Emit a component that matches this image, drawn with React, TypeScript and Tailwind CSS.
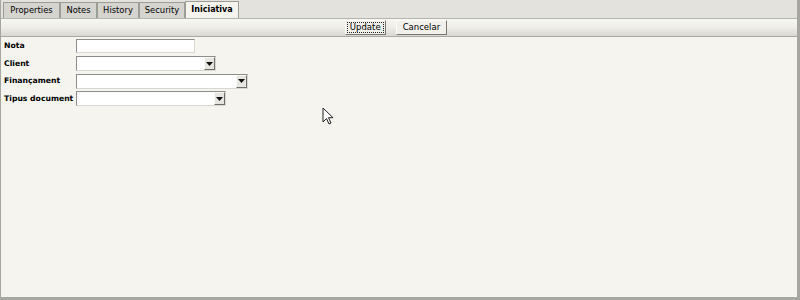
const tabs = ["Properties", "Notes", "History", "Security", "Iniciativa"];
const tabWidths = ["w-[57px]", "w-[37px]", "w-[42px]", "w-[46px]", "w-[54px]"];

const Select = ({ width }: { width: string }) => (
  <div className={`${width} h-[15px] flex bg-white border border-[#8c8c88] border-r-[#d8d7d2] border-b-[#d8d7d2]`}>
    <div className="flex-1" />
    <div className="w-[11px] h-[13px] flex items-center justify-center bg-[#e6e5e0] border border-[#f8f8f5] border-r-[#6e6e6a] border-b-[#6e6e6a]">
      <svg width="7" height="4" viewBox="0 0 7 4">
        <path d="M0 0h7L3.5 4z" fill="#111" />
      </svg>
    </div>
  </div>
);

const Row = ({ label, children }: { label: string; children: React.ReactNode }) => (
  <div className="flex items-center h-[14px]">
    <label className="w-[72px] font-bold text-[7.7px] text-[#000]">{label}</label>
    {children}
  </div>
);

export default function App() {
  return (
    <div
      className="w-[800px] h-[300px] bg-[#f5f4ee] relative border-l border-r-[3px] border-b-[3px] border-[#a7a7a1] overflow-hidden"
      style={{ fontFamily: '"DejaVu Sans", sans-serif' }}
    >
      <div className="h-[18px] bg-[#e3e2dd] flex items-end pl-[2px]">
        {tabs.map((t, i) => {
          const active = i === tabs.length - 1;
          return (
            <div
              key={t}
              className={`${tabWidths[i]} h-[16px] flex items-center justify-center border border-b-0 border-[#9d9d98] ${
                active
                  ? "bg-[#f4f3ee] font-bold text-[8px] text-[#000] h-[17px] z-10"
                  : "bg-[#d5d4cf] text-[8.4px] text-[#000]"
              }`}
            >
              {t}
            </div>
          );
        })}
        <div className="flex-1" />
      </div>
      <div className="h-[19px] pr-[6px] bg-gradient-to-b from-[#f8f8f3] via-[#eeede8] to-[#d9d8d3] border-t border-[#b5b5b0] border-b border-b-[#a9a9a4] flex items-center justify-center gap-[10px]">
        <button className="h-[15px] px-[4px] bg-[#f1f0eb] border border-[#fafaf7] border-r-[#77776f] border-b-[#77776f] text-[8.5px] text-[#000] outline outline-1 outline-dotted outline-[#222] -outline-offset-[3px]">
          Update
        </button>
        <button className="h-[15px] px-[6px] bg-[#f1f0eb] border border-[#fafaf7] border-r-[#77776f] border-b-[#77776f] text-[8.5px] text-[#000]">
          Cancelar
        </button>
      </div>
      <div className="pl-[3px] pt-[2px] flex flex-col gap-[3.5px]">
        <Row label="Nota">
          <div className="w-[119px] h-[14px] bg-white border border-[#8c8c88] border-r-[#d8d7d2] border-b-[#d8d7d2]" />
        </Row>
        <Row label="Client">
          <Select width="w-[140px]" />
        </Row>
        <Row label="Finançament">
          <Select width="w-[172px]" />
        </Row>
        <Row label="Tipus document">
          <Select width="w-[150px]" />
        </Row>
      </div>
      <svg className="absolute left-[321px] top-[107px]" width="12" height="18" viewBox="0 0 12 18">
        <path d="M1 1v14l3.5-3.5 2.5 5.5 2-1-2.5-5.3H11z" fill="#fff" stroke="#222" strokeWidth="1" strokeLinejoin="round" />
      </svg>
    </div>
  );
}
